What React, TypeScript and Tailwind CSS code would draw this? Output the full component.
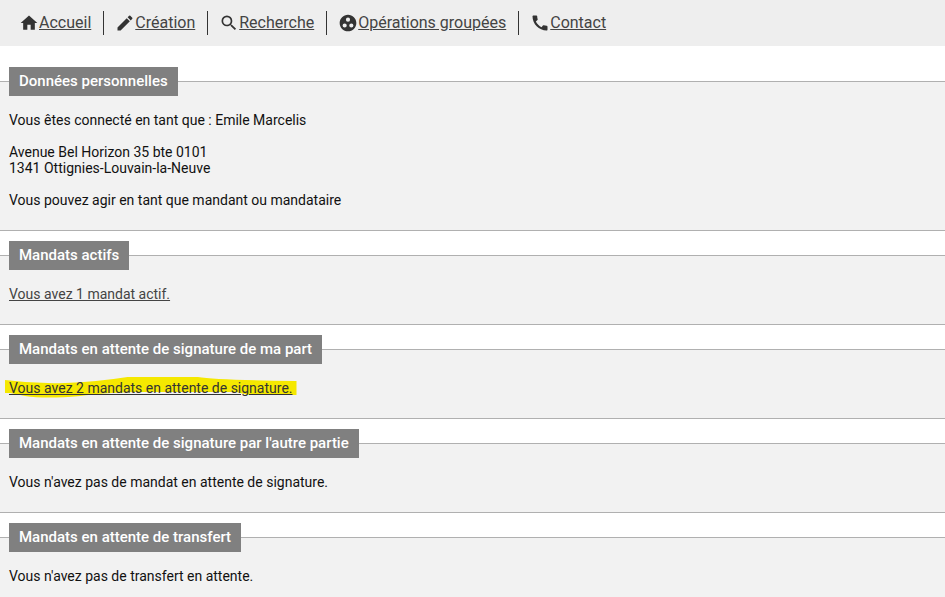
import { ReactNode } from "react";
import { IconType } from "react-icons";
import {
  MdCall,
  MdCreate,
  MdGroupWork,
  MdHome,
  MdSearch,
} from "react-icons/md";

const navItems: { title: string; icon: IconType }[] = [
  { title: "Accueil", icon: MdHome },
  { title: "Création", icon: MdCreate },
  { title: "Recherche", icon: MdSearch },
  { title: "Opérations groupées", icon: MdGroupWork },
  { title: "Contact", icon: MdCall },
];

function Section({ title, children }: { title: string; children: ReactNode }) {
  return (
    <fieldset className="relative min-w-0 pb-[23px]">
      {/* grey panel starts halfway down the title */}
      <div className="absolute inset-x-0 top-[14px] bottom-0 border-y border-[#b0b0b0] bg-[#f2f2f2]" />
      <legend className="relative float-left ml-[9px] bg-[#808080] px-[10px] text-[15px] leading-[29px] font-medium text-white">
        {title}
      </legend>
      <div className="relative clear-both space-y-4 px-[9px] pt-4">
        {children}
      </div>
    </fieldset>
  );
}

export default function App() {
  return (
    <div className="bg-white font-[Roboto,sans-serif] text-sm leading-4 text-[#111]">
      <nav className="flex bg-[#eee] px-2 py-[11px]">
        {navItems.map(({ title, icon: Icon }) => (
          <a
            key={title}
            href="#"
            className="flex items-center border-r border-[#333] pr-3 pl-[11px] text-base leading-6 text-[#444] last:border-r-0"
          >
            <Icon className="size-5 text-[#333]" />
            <span className="underline">{title}</span>
          </a>
        ))}
      </nav>
      <main className="mt-[21px] space-y-[10px]">
        <Section title="Données personnelles">
          <p>Vous êtes connecté en tant que : Emile Marcelis</p>
          <p>
            Avenue Bel Horizon 35 bte 0101
            <br />
            1341 Ottignies-Louvain-la-Neuve
          </p>
          <p>Vous pouvez agir en tant que mandant ou mandataire</p>
        </Section>
        <Section title="Mandats actifs">
          <a href="#" className="block w-fit text-[#444] underline">
            Vous avez 1 mandat actif.
          </a>
        </Section>
        <Section title="Mandats en attente de signature de ma part">
          <a
            href="#"
            className="relative isolate block w-fit text-[#333] underline"
          >
            <svg
              viewBox="0 0 290 22"
              preserveAspectRatio="none"
              className="absolute -inset-x-1 -top-1 -z-10 h-[22px] w-[calc(100%+8px)]"
              fill="#f5e800"
              aria-hidden="true"
            >
              <path d="M0 4 Q30 8 60 7 T122 1 H192 Q210 4 290 5 V19 H242 L230 16 H130 Q95 17 75 20 Q40 23 20 20 L5 17 H0Z" />
            </svg>
            Vous avez 2 mandats en attente de signature.
          </a>
        </Section>
        <Section title="Mandats en attente de signature par l'autre partie">
          <p>Vous n'avez pas de mandat en attente de signature.</p>
        </Section>
        <Section title="Mandats en attente de transfert">
          <p>Vous n'avez pas de transfert en attente.</p>
        </Section>
      </main>
    </div>
  );
}
